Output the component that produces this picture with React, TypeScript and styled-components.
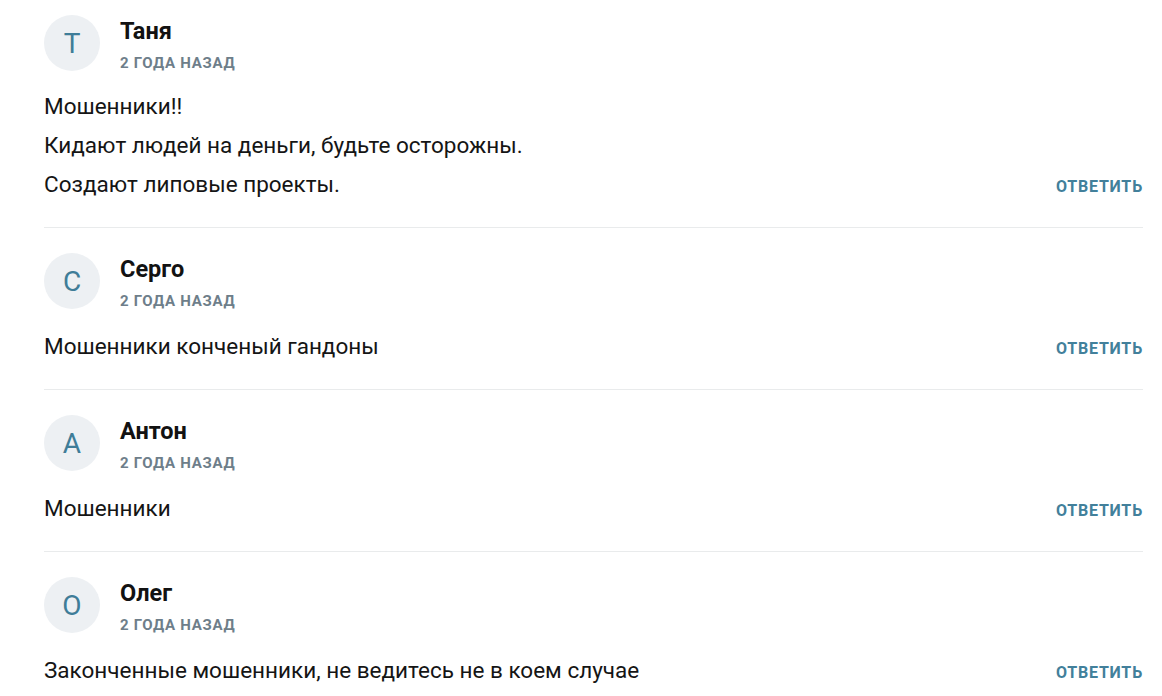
import React from 'react';
import styled, { createGlobalStyle } from 'styled-components';

const GlobalStyle = createGlobalStyle`
  body {
    margin: 0;
    background: #ffffff;
    font-family: Roboto, "Noto Sans", "Liberation Sans", sans-serif;
    color: #151515;
  }
`;

const List = styled.div`
  padding: 0 19px 0 44px;
`;

const Comment = styled.div`
  padding: 25px 0 23px;
  border-bottom: 1px solid #e9ebec;

  &:first-child {
    padding-top: 15px;
  }

  &:last-child {
    border-bottom: none;
  }
`;

const Header = styled.div`
  display: flex;
  align-items: flex-start;
  gap: 20px;
`;

const Avatar = styled.div`
  width: 56px;
  height: 56px;
  border-radius: 50%;
  background: #edf0f3;
  color: #3f7d98;
  font-size: 28px;
  display: flex;
  align-items: center;
  justify-content: center;
  flex-shrink: 0;
`;

const Meta = styled.div`
  display: flex;
  flex-direction: column;
  gap: 9px;
  padding-top: 3px;
`;

const Name = styled.div`
  font-size: 23.5px;
  font-weight: 700;
  line-height: 26px;
  color: #121212;
`;

const Date = styled.div`
  font-size: 15px;
  font-weight: 700;
  line-height: 20px;
  letter-spacing: 0.7px;
  text-transform: uppercase;
  color: #6e7e8a;
`;

const Body = styled.div`
  margin-top: 14px;
  display: flex;
  align-items: flex-end;
  justify-content: space-between;
  gap: 20px;
`;

const Text = styled.div`
  font-size: 22.5px;
  line-height: 39px;
  color: #151515;
`;

const Reply = styled.button`
  border: none;
  background: none;
  padding: 14px 0 0;
  margin-bottom: 8px;
  font-family: inherit;
  font-size: 16px;
  line-height: 19px;
  font-weight: 700;
  letter-spacing: 0.8px;
  text-transform: uppercase;
  color: #42809b;
  cursor: pointer;
`;

const comments = [
  {
    name: 'Таня',
    lines: ['Мошенники!!', 'Кидают людей на деньги, будьте осторожны.', 'Создают липовые проекты.'],
  },
  { name: 'Серго', lines: ['Мошенники конченый гандоны'] },
  { name: 'Антон', lines: ['Мошенники'] },
  { name: 'Олег', lines: ['Законченные мошенники, не ведитесь не в коем случае'] },
];

const App: React.FC = () => (
  <>
    <GlobalStyle />
    <List>
      {comments.map((c) => (
        <Comment key={c.name}>
          <Header>
            <Avatar>{c.name[0]}</Avatar>
            <Meta>
              <Name>{c.name}</Name>
              <Date>2 года назад</Date>
            </Meta>
          </Header>
          <Body>
            <Text>
              {c.lines.map((l) => (
                <div key={l}>{l}</div>
              ))}
            </Text>
            <Reply>Ответить</Reply>
          </Body>
        </Comment>
      ))}
    </List>
  </>
);

export default App;
